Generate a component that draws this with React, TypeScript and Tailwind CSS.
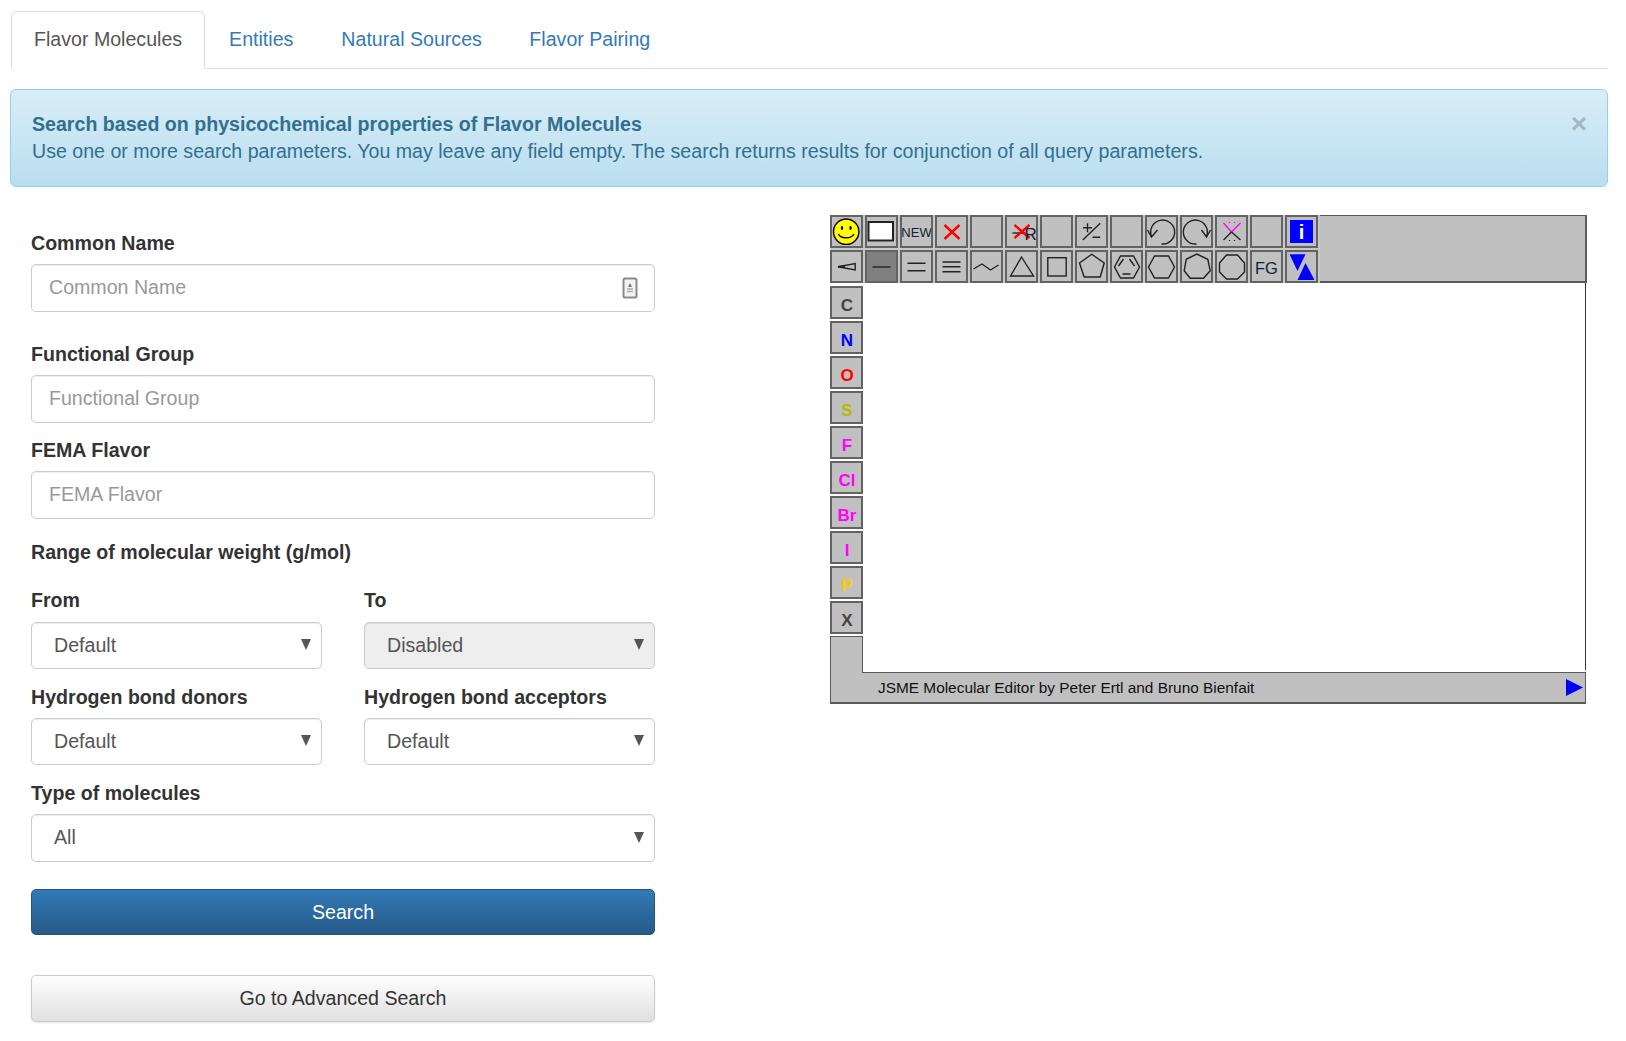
import React from "react";

const D = "#222";

function Tb({ children, active }: { children?: React.ReactNode; active?: boolean }) {
  return (
    <div className={`w-[33px] h-[33px] shrink-0 border-2 border-[#636363] flex items-center justify-center overflow-hidden ${active ? "bg-[#808080]" : "bg-[#c0c0c0]"}`}>
      {children}
    </div>
  );
}

function Ic({ children }: { children: React.ReactNode }) {
  return (
    <svg width="29" height="29" viewBox="2.5 2 29 29" fill="none" stroke={D} strokeWidth="1.4">
      {children}
    </svg>
  );
}

function Atom({ t, c }: { t: string; c: string }) {
  return (
    <Tb>
      <span className={`font-bold text-[17px] leading-none mt-[6px] ml-[1px] ${c}`}>{t}</span>
    </Tb>
  );
}

function Field({ label, placeholder, icon }: { label: string; placeholder: string; icon?: boolean }) {
  return (
    <div className="flex flex-col">
      <label className="font-bold text-[#333] h-[22px] leading-[22px] mb-[10px]">{label}</label>
      <div className="relative">
        <input
          placeholder={placeholder}
          className="w-full h-[48px] border border-[#ccc] rounded-[5px] px-[17px] pb-[2px] text-[#555] placeholder:text-[#999] shadow-[inset_0_1px_1px_rgba(0,0,0,0.075)] outline-none bg-white"
        />
        {icon && (
          <svg className="absolute right-[17px] top-[13px]" width="16" height="22" viewBox="0 0 16 22">
            <rect x="1.5" y="1.5" width="13" height="19" rx="1.5" fill="#f2f2f2" stroke="#8a8a8a" strokeWidth="2" />
            <path d="M8 6l2 4H6z" fill="#777" />
            <path d="M5 12h6M5 14.5h6" stroke="#aaa" strokeWidth="1.5" />
          </svg>
        )}
      </div>
    </div>
  );
}

function Sel({ label, value, disabled, gap, tall }: { label: string; value: string; disabled?: boolean; gap?: boolean; tall?: boolean }) {
  return (
    <div className="flex flex-col flex-1 min-w-0">
      <label className={`font-bold text-[#333] h-[22px] leading-[22px] ${gap ? "mb-[11px]" : "mb-[10px]"}`}>{label}</label>
      <div className="relative">
        <select
          disabled={disabled}
          defaultValue={value}
          className={`w-full appearance-none border border-[#ccc] rounded-[5px] pl-[22px] pr-[30px] text-[#555] shadow-[inset_0_1px_1px_rgba(0,0,0,0.075)] outline-none ${tall ? "h-[48px]" : "h-[47px]"} ${disabled ? "bg-[#eee]" : "bg-white"}`}
        >
          <option>{value}</option>
        </select>
        <svg className={`absolute right-[11px] ${tall ? "top-[18px]" : "top-[17px]"}`} width="10" height="11" viewBox="0 0 10 11">
          <path d="M0 0h10L5 11z" fill="#555" />
        </svg>
      </div>
    </div>
  );
}

export default function App() {
  return (
    <div className="w-[1626px] h-[1041px] overflow-hidden bg-white pl-[10px] pr-[18px] pt-[11px] text-[19.6px] font-['Liberation_Sans',Arial,sans-serif]">
      {/* Tabs */}
      <div className="flex ml-px h-[58px] border-b border-[#ddd]">
        <div className="h-[58px] px-[22px] flex items-center border border-[#ddd] border-b-white rounded-t-[6px] text-[#555] bg-white">
          Flavor Molecules
        </div>
        <div className="ml-[1px] h-[57px] px-[23px] flex items-center text-[#337ab7]">Entities</div>
        <div className="ml-[2px] h-[57px] px-[23px] flex items-center text-[#337ab7]">Natural Sources</div>
        <div className="ml-[1.5px] h-[57px] px-[23px] flex items-center text-[#337ab7]">Flavor Pairing</div>
      </div>

      {/* Alert */}
      <div className="mt-[20px] h-[98px] border border-[#9acfea] rounded-[6px] bg-gradient-to-b from-[#d9edf7] to-[#b9def0] shadow-[0_1px_0_rgba(255,255,255,0.25)] pl-[21px] pr-[20px] pt-[21px] text-[#31708f] flex justify-between">
        <div className="leading-[27px]">
          <div className="font-bold">Search based on physicochemical properties of Flavor Molecules</div>
          <div>Use one or more search parameters. You may leave any field empty. The search returns results for conjunction of all query parameters.</div>
        </div>
        <div className="font-bold text-[28px] leading-[28px] -mt-[1px] text-black opacity-20">×</div>
      </div>

      <div className="flex">
        {/* Form */}
        <div className="w-[624px] ml-[21px] pt-[45px] flex flex-col">
          <Field label="Common Name" placeholder="Common Name" icon />
          <div className="mt-[31px]">
            <Field label="Functional Group" placeholder="Functional Group" />
          </div>
          <div className="mt-[16px]">
            <Field label="FEMA Flavor" placeholder="FEMA Flavor" />
          </div>
          <div className="font-bold text-[#333] h-[22px] leading-[22px] mt-[22px]">Range of molecular weight (g/mol)</div>
          <div className="flex gap-[42px] mt-[26px]">
            <Sel label="From" value="Default" gap />
            <Sel label="To" value="Disabled" disabled gap />
          </div>
          <div className="flex gap-[42px] mt-[17px]">
            <Sel label="Hydrogen bond donors" value="Default" />
            <Sel label="Hydrogen bond acceptors" value="Default" />
          </div>
          <div className="mt-[17px]">
            <Sel label="Type of molecules" value="All" tall />
          </div>
          <button className="mt-[27px] h-[46px] pt-[1px] rounded-[5px] border border-[#245580] bg-gradient-to-b from-[#337ab7] to-[#265a88] text-white">
            Search
          </button>
          <button className="mt-[40px] h-[47px] rounded-[5px] border border-[#ccc] bg-gradient-to-b from-white to-[#e0e0e0] text-[#333] shadow-[0_1px_2px_rgba(0,0,0,0.1)]">
            Go to Advanced Search
          </button>
        </div>

        {/* JSME */}
        <div className="ml-[175px] mt-[28px] w-[757px] h-[489px] flex flex-col">
          <div className="flex h-[68px] bg-[#c8c8c8]">
            <div className="flex flex-col gap-[2px]">
              <div className="flex gap-[2px]">
                <Tb>
                  <Ic>
                    <circle cx="16.7" cy="16.7" r="12.7" fill="#ff0" stroke="#000" />
                    <ellipse cx="12.5" cy="13" rx="1.2" ry="2" fill="#000" stroke="none" />
                    <ellipse cx="21" cy="13" rx="1.2" ry="2" fill="#000" stroke="none" />
                    <path d="M9 19c2 5 13 5 15.500 0" stroke="#000" />
                  </Ic>
                </Tb>
                <Tb>
                  <Ic>
                    <rect x="4" y="7" width="24.500" height="18.500" fill="#fff" strokeWidth="2" />
                  </Ic>
                </Tb>
                <Tb>
                  <span className="text-[13px] leading-none text-[#123] mt-[2px]">NEW</span>
                </Tb>
                <Tb>
                  <Ic>
                    <path d="M10 10l15 14M25 10L10 24" stroke="#f00" strokeWidth="2.400" />
                  </Ic>
                </Tb>
                <Tb />
                <Tb>
                  <Ic>
                    <path d="M8 18h13" />
                    <path d="M10 10l15 13M25 10L10 23" stroke="#f00" strokeWidth="2.400" />
                    <text x="20" y="25" fontSize="17" fill="#123" stroke="none">R</text>
                  </Ic>
                </Tb>
                <Tb />
                <Tb>
                  <Ic>
                    <path d="M8.500 12.700h9M13 8.200v9M8.300 25L25.700 8.300M18 22.300h7.700" />
                  </Ic>
                </Tb>
                <Tb />
                <Tb>
                  <Ic>
                    <path d="M17 29A12 12 0 1 0 7 21.500" />
                    <path d="M3 15l4 7 6-7" />
                  </Ic>
                </Tb>
                <Tb>
                  <Ic>
                    <path d="M17 29A12 12 0 1 1 27 21.500" />
                    <path d="M22 15l5 7 4-7" />
                  </Ic>
                </Tb>
                <Tb>
                  <Ic>
                    <path d="M9 8l8 9 9-9" stroke="#f0f" />
                    <path d="M17 17L9 25M17 17l9 8" />
                    <path d="M15 7v1M20 7v1" stroke="#f0f" />
                    <path d="M15 25v1M20 25v1" />
                  </Ic>
                </Tb>
                <Tb />
                <Tb>
                  <div className="w-[23px] h-[23px] bg-[#00f] text-white font-bold text-[20px] leading-[24px] text-center">i</div>
                </Tb>
              </div>
              <div className="flex gap-[2px]">
                <Tb>
                  <Ic>
                    <path d="M8.500 16.800L25.700 13.500v6.500z" strokeWidth="1.400" />
                    <path d="M8.500 16.800l7 0" strokeWidth="2" />
                  </Ic>
                </Tb>
                <Tb active>
                  <Ic>
                    <path d="M8 17h18" />
                  </Ic>
                </Tb>
                <Tb>
                  <Ic>
                    <path d="M8 13.300h18M8 20.700h18" />
                  </Ic>
                </Tb>
                <Tb>
                  <Ic>
                    <path d="M8 12h18M8 16.800h18M8 21.700h18" />
                  </Ic>
                </Tb>
                <Tb>
                  <Ic>
                    <path d="M4 19l8.500-5 8.500 6 8-5" />
                  </Ic>
                </Tb>
                <Tb>
                  <Ic>
                    <path d="M17 7L6 26h23z" />
                  </Ic>
                </Tb>
                <Tb>
                  <Ic>
                    <rect x="8.300" y="7.700" width="18.400" height="18.300" />
                  </Ic>
                </Tb>
                <Tb>
                  <Ic>
                    <path d="M17.300 4.300L29.700 13l-4 14h-16L5 13z" />
                  </Ic>
                </Tb>
                <Tb>
                  <Ic>
                    <path d="M5 17l6-11h13l6 11-6 11H11z" />
                    <path d="M9 16l5-7M20 9l5 7M13 24h8" />
                  </Ic>
                </Tb>
                <Tb>
                  <Ic>
                    <path d="M4 17l6-11h14l6 11-6 11H10z" />
                  </Ic>
                </Tb>
                <Tb>
                  <Ic>
                    <path d="M17.300 4l11 5.300 2.400 11.400L24 28.300H10.700L4.700 20.700 6.700 9.300z" />
                  </Ic>
                </Tb>
                <Tb>
                  <Ic>
                    <path d="M5 13l7-8h11l7 8v9l-7 7H12l-7-7z" />
                  </Ic>
                </Tb>
                <Tb>
                  <span className="text-[16.500px] leading-none text-[#123] mt-[3px]">FG</span>
                </Tb>
                <Tb>
                  <Ic>
                    <path d="M5 4.300h16L13 21zM21 13l-8 17h17z" fill="#00f" stroke="none" />
                  </Ic>
                </Tb>
              </div>
            </div>
            <div className="flex-1 ml-[2px] bg-[#c0c0c0] border-t border-r-2 border-b-2 border-[#5a5a5a]" />
          </div>

          <div className="flex h-[389px]">
            <div className="w-[33px] pt-[3px] flex flex-col gap-[2px]">
              <Atom t="C" c="text-[#444]" />
              <Atom t="N" c="text-[#00f]" />
              <Atom t="O" c="text-[#f00]" />
              <Atom t="S" c="text-[#b8b800]" />
              <Atom t="F" c="text-[#f0f]" />
              <Atom t="Cl" c="text-[#f0f]" />
              <Atom t="Br" c="text-[#f0f]" />
              <Atom t="I" c="text-[#f0f]" />
              <Atom t="P" c="text-[#ffc800]" />
              <Atom t="X" c="text-[#444]" />
              <div className="flex-1 relative z-10 -mb-[1px] bg-[#c0c0c0] border-t border-r border-l border-[#5a5a5a]" />
            </div>
            <div className="flex-1 mb-[2px] mr-[1px] border-r border-[#333] bg-white" />
          </div>

          <div className="h-[32px] mr-[1px] bg-[#c0c0c0] border-t border-b-2 border-r border-l border-[#5a5a5a] flex items-center justify-between pl-[47px] pr-[2px]">
            <span className="text-[15.400px] text-[#111]">JSME Molecular Editor by Peter Ertl and Bruno Bienfait</span>
            <svg width="17" height="17" viewBox="0 0 17 17">
              <path d="M0 0l17 8.500L0 17z" fill="#00f" />
            </svg>
          </div>
        </div>
      </div>
    </div>
  );
}
